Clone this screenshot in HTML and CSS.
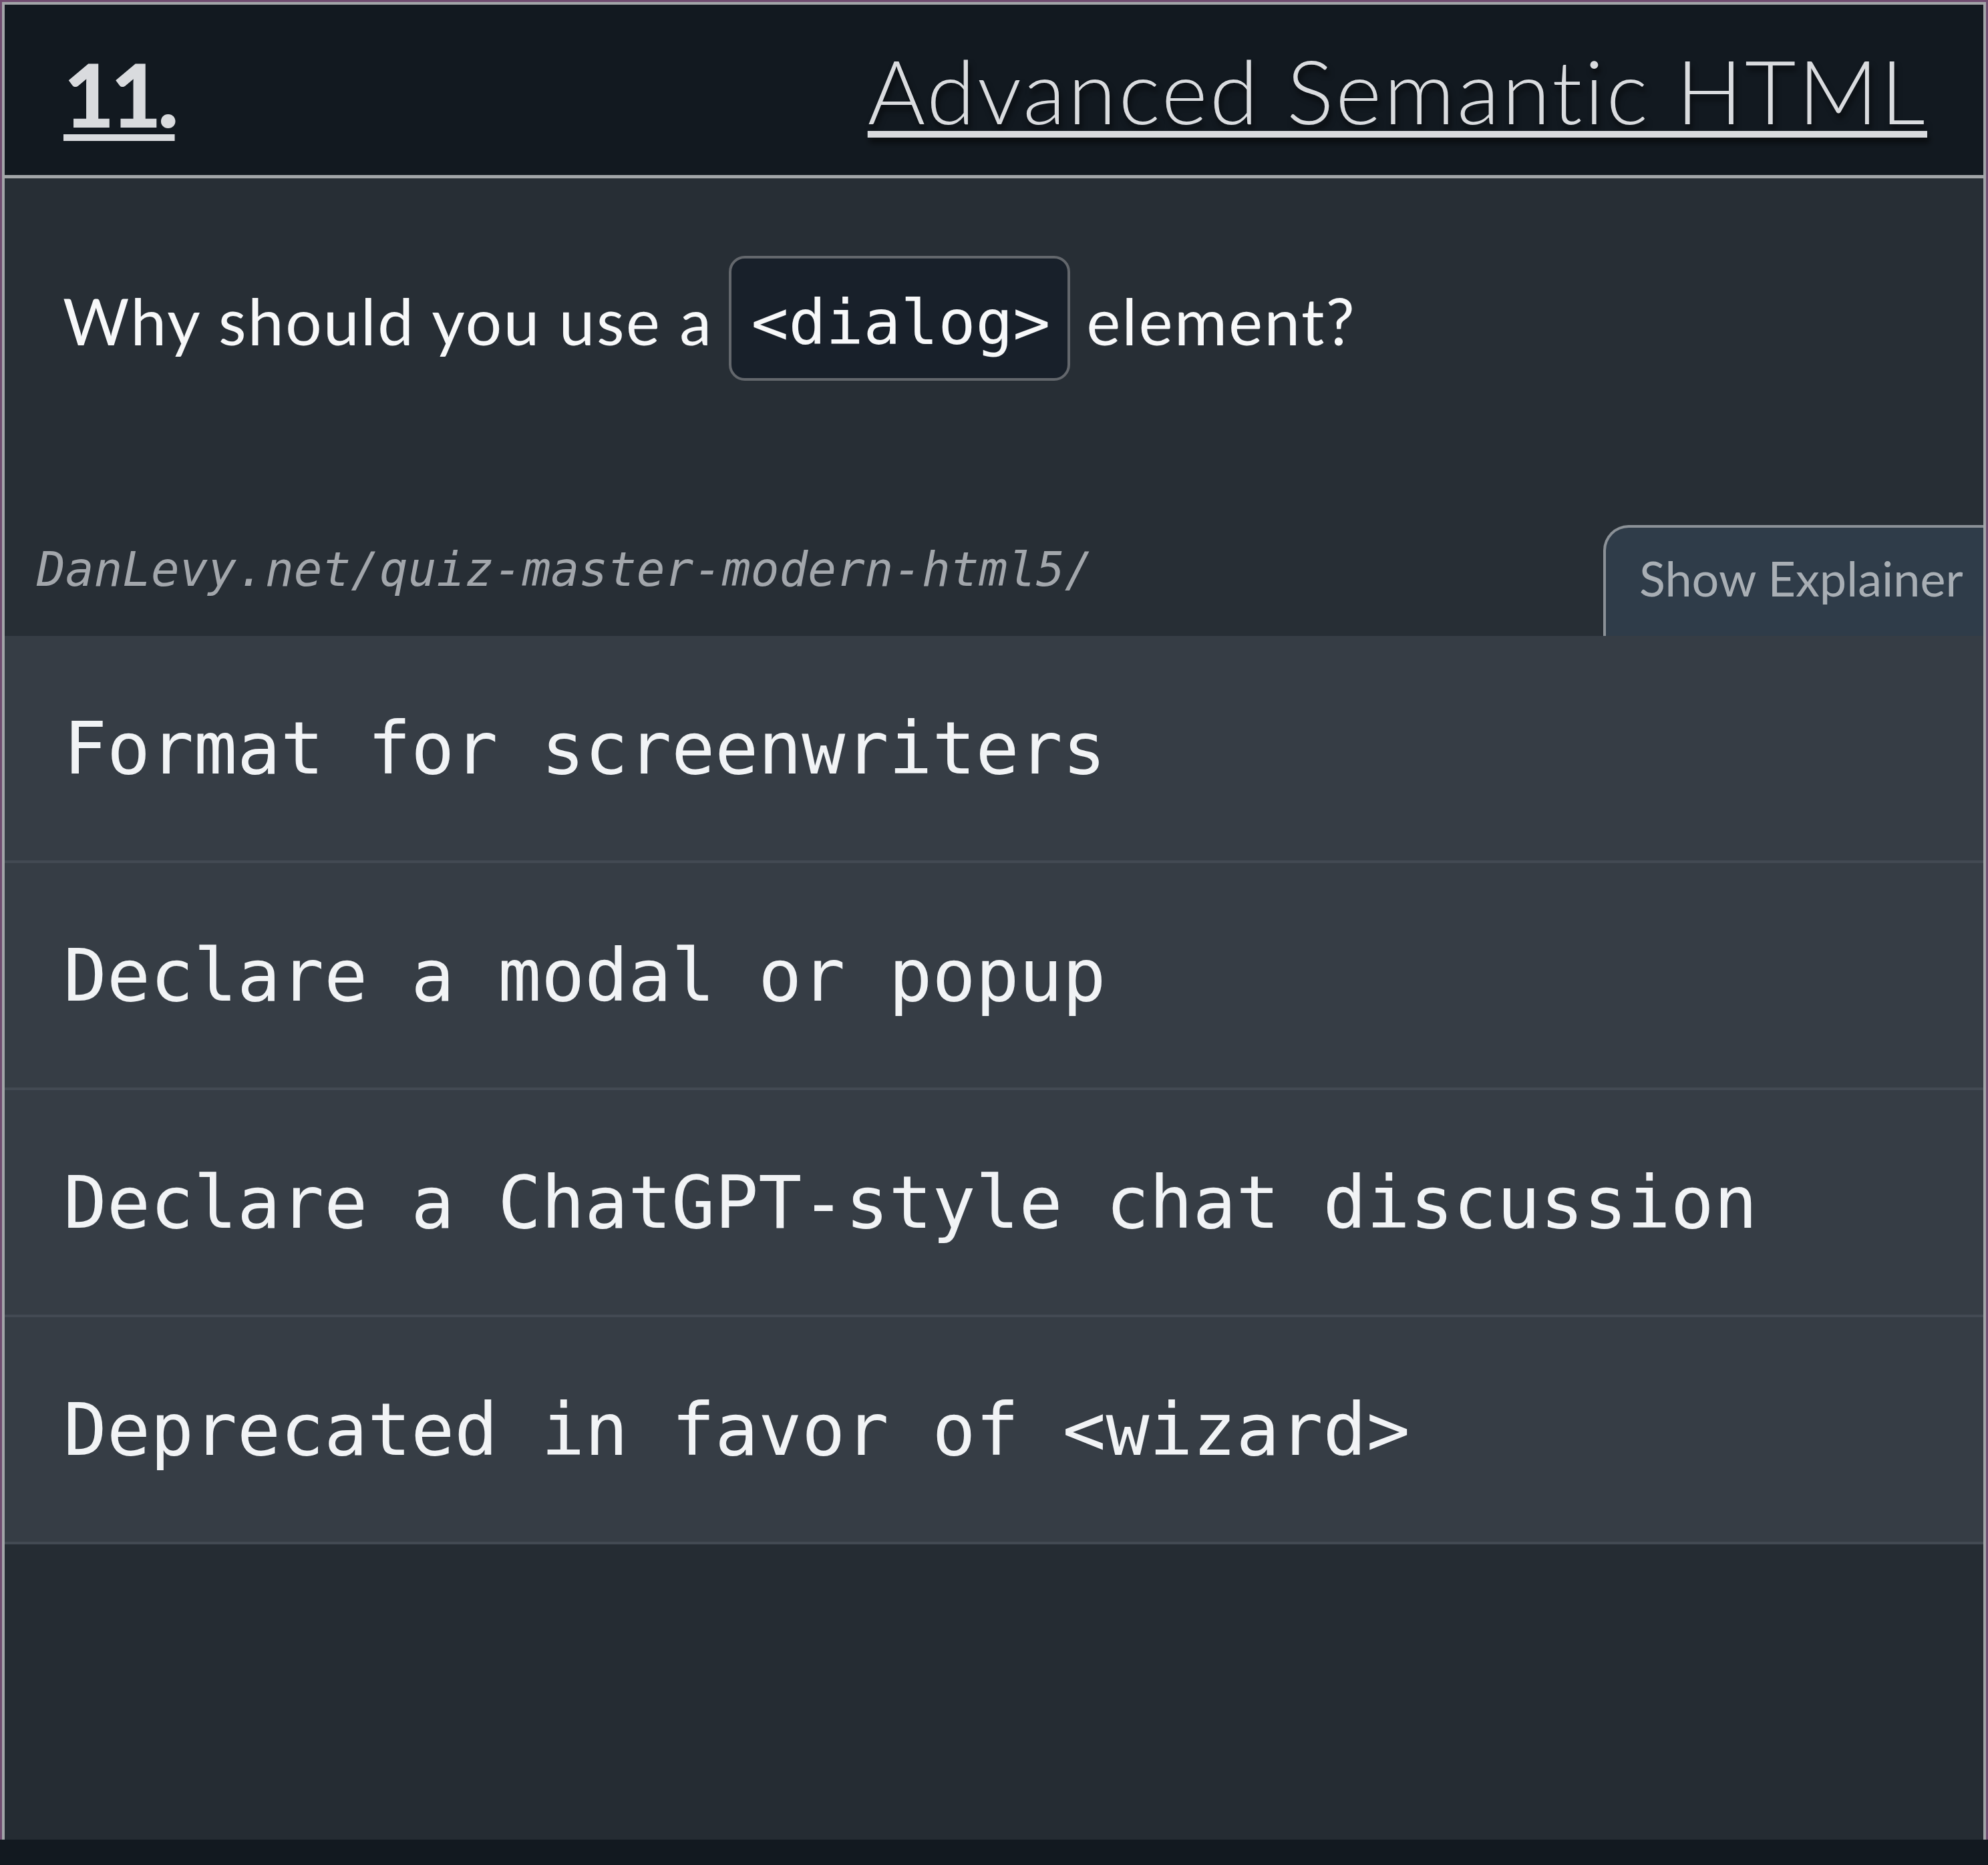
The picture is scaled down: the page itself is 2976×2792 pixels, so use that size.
FILE: index.html
```html
<!DOCTYPE html>
<html lang="en">
<head>
<meta charset="utf-8">
<title>Quiz: Advanced Semantic HTML</title>
<link rel="stylesheet" href="styles.css">
</head>
<body>
<div class="frame">
  <article class="card">
    <header class="card-header">
      <h2 class="num">11.</h2>
      <h2 class="title">Advanced Semantic HTML</h2>
    </header>
    <section class="question">
      <span class="q-text">Why should you use a</span>
      <code class="q-code">&lt;dialog&gt;</code>
      <span class="q-text">element?</span>
    </section>
    <div class="meta">
      <span class="url">DanLevy.net/quiz-master-modern-html5/</span>
      <button class="explain" type="button">Show Explainer</button>
    </div>
    <ul class="answers">
      <li class="answer">Format for screenwriters</li>
      <li class="answer">Declare a modal or popup</li>
      <li class="answer">Declare a ChatGPT-style chat discussion</li>
      <li class="answer">Deprecated in favor of &lt;wizard&gt;</li>
    </ul>
  </article>
</div>
</body>
</html>
```

FILE: styles.css
```css
* { box-sizing: border-box; }

html, body {
  margin: 0;
  padding: 0;
  background: #121920;
}

body {
  width: 2976px;
  height: 2792px;
  overflow: hidden;
  font-family: "Lato", "Open Sans", sans-serif;
}

.frame {
  height: 2754px;
  border: 3px solid #704c70;
  border-bottom: 0;
}

.card {
  height: 100%;
  border: 4px solid #a2a5a8;
  border-bottom: 0;
  background: #252c33;
  display: flex;
  flex-direction: column;
}

.card-header {
  height: 260px;
  flex: none;
  background: #121920;
  border-bottom: 5px solid #a2a5a8;
  display: flex;
  align-items: center;
  justify-content: space-between;
  padding: 0 84px 0 88px;
}

.card-header h2 {
  margin: 0;
  color: #d9dbde;
  text-decoration: underline;
  text-decoration-thickness: 10px;
  line-height: 1;
}

.num {
  font-family: "Lato", sans-serif;
  font-weight: 900;
  font-size: 132px;
  letter-spacing: -6px;
  text-underline-offset: 10px;
  margin-top: 10px !important;
}

.title {
  font-family: "Lato", sans-serif;
  font-weight: 300;
  font-size: 132px;
  letter-spacing: 3.3px;
  text-underline-offset: 10px;
  text-shadow: 3px 8px 8px rgba(0, 0, 0, 0.55);
}

.question {
  background: #272e35;
  padding: 116px 88px 0 87px;
  display: flex;
  align-items: center;
  gap: 24px;
  flex: none;
}

.q-text {
  font-size: 96px;
  color: #f7f8f9;
  font-weight: 400;
  letter-spacing: 2.5px;
  margin-top: 6px;
}

.q-code {
  font-family: "DejaVu Sans Mono", monospace;
  font-size: 93px;
  line-height: 143px;
  color: #f7f8f9;
  background: #18202a;
  border: 4px solid #63676c;
  border-radius: 24px;
  padding: 25px 26px 11px 29px;
}

.meta {
  background: #272e35;
  flex: none;
  padding-top: 216px;
  display: flex;
  align-items: flex-end;
  justify-content: space-between;
  padding-left: 48px;
}

.url {
  font-family: "DejaVu Sans Mono", monospace;
  font-style: italic;
  font-size: 71px;
  line-height: 1;
  color: #a2a6ab;
  padding-bottom: 64px;
}

.explain {
  width: 569px;
  height: 166px;
  margin: 0;
  background: #2f3c49;
  border: 4px solid #8b9197;
  border-right: 0;
  border-bottom: 0;
  border-radius: 38px 0 0 0;
  color: #a8aeb4;
  font-family: "Lato", sans-serif;
  font-size: 72px;
  text-align: left;
  padding: 0 0 12px 50px;
}

.answers {
  list-style: none;
  margin: 0;
  padding: 0;
  flex: none;
}

.answer {
  height: 340px;
  background: #363d45;
  border-bottom: 4px solid #434a53;
  display: flex;
  align-items: center;
  padding-left: 88px;
  font-family: "DejaVu Sans Mono", monospace;
  font-size: 108px;
  color: #f1f3f5;
  white-space: pre;
}
```
